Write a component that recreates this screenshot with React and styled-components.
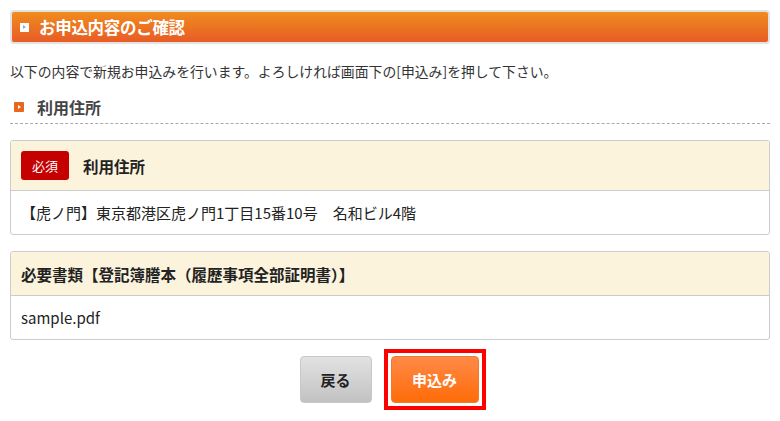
import styled, { createGlobalStyle } from "styled-components";

const GlobalStyle = createGlobalStyle`
  body {
    margin: 0;
    background: #fff;
    font-family: "Noto Sans CJK JP", "Noto Sans", sans-serif;
    color: #333;
  }
`;

const Page = styled.div`
  padding: 10px 10px 0;
  width: 760px;
`;

const TitleBar = styled.div`
  display: flex;
  align-items: center;
  gap: 10px;
  height: 30px;
  padding: 0 8px;
  border: 2px solid #e2e2e2;
  border-radius: 4px;
  background: linear-gradient(#f08c1e, #e85c26);
  color: #fff;
  font-size: 16.5px;
  font-weight: 700;
  letter-spacing: -0.3px;
`;

const TitleIcon = styled.span`
  width: 9px;
  height: 9px;
  background: #fff;
  display: flex;
  align-items: center;
  justify-content: center;
  &::after {
    content: "";
    border-left: 3px solid #aaa;
    border-top: 2px solid transparent;
    border-bottom: 2px solid transparent;
  }
`;

const Intro = styled.p`
  margin: 18px 0 0;
  font-size: 13.85px;
  line-height: 18px;
`;

const SectionHead = styled.h2`
  display: flex;
  align-items: center;
  gap: 13px;
  margin: 16px 0 0;
  padding: 0 0 5px 4px;
  border-bottom: 1px dashed #aaa;
  font-size: 16px;
  line-height: 22px;
  color: #444;
`;

const SectionIcon = styled.span`
  width: 10px;
  height: 10px;
  border-radius: 1px;
  background: #e8661e;
  display: flex;
  align-items: center;
  justify-content: center;
  &::after {
    content: "";
    border-left: 3px solid #fff;
    border-top: 2px solid transparent;
    border-bottom: 2px solid transparent;
  }
`;

const Card = styled.div`
  margin-top: 16px;
  border: 1px solid #ccc;
  border-radius: 3px;
  overflow: hidden;
`;

const CardHead = styled.div`
  display: flex;
  align-items: center;
  gap: 14px;
  height: ${(p) => p.$h}px;
  padding: 0 10px;
  background: #fcf3dd;
  border-bottom: 1px solid #ccc;
  font-size: 15.5px;
  font-weight: 700;
  color: #222;
`;

const Badge = styled.span`
  width: 48px;
  height: 29px;
  border-radius: 3px;
  background: #c50000;
  color: #fff;
  font-size: 13px;
  font-weight: 400;
  display: flex;
  align-items: center;
  justify-content: center;
`;

const CardBody = styled.div`
  height: 43px;
  padding: 0 10px;
  display: flex;
  align-items: center;
  font-size: 15px;
  color: #222;
`;

const Buttons = styled.div`
  display: flex;
  justify-content: center;
  align-items: center;
  gap: 12px;
  margin-top: 9px;
  padding-left: 5px;
`;

const Button = styled.button`
  width: ${(p) => p.$w}px;
  height: 47px;
  border-radius: 4px;
  font-family: inherit;
  font-size: 15px;
  font-weight: 700;
  cursor: pointer;
  border: 1px solid ${(p) => (p.$primary ? "#f07a30" : "#c8c8c8")};
  color: ${(p) => (p.$primary ? "#fff" : "#222")};
  background: ${(p) =>
    p.$primary
      ? "linear-gradient(#ff8a48, #ff6c08)"
      : "linear-gradient(#e2e2e2, #c2c2c2)"};
`;

const Highlight = styled.div`
  border: 4px solid #ff0000;
  padding: 3px;
  display: flex;
`;

export default function App() {
  return (
    <>
      <GlobalStyle />
      <Page>
        <TitleBar>
          <TitleIcon />
          お申込内容のご確認
        </TitleBar>
        <Intro>以下の内容で新規お申込みを行います。よろしければ画面下の[申込み]を押して下さい。</Intro>
        <SectionHead>
          <SectionIcon />
          利用住所
        </SectionHead>
        <Card>
          <CardHead $h={49}>
            <Badge>必須</Badge>
            利用住所
          </CardHead>
          <CardBody>【虎ノ門】東京都港区虎ノ門1丁目15番10号　名和ビル4階</CardBody>
        </Card>
        <Card>
          <CardHead $h={43}>必要書類【登記簿謄本（履歴事項全部証明書）】</CardHead>
          <CardBody>sample.pdf</CardBody>
        </Card>
        <Buttons>
          <Button $w={72}>戻る</Button>
          <Highlight>
            <Button $w={88} $primary>申込み</Button>
          </Highlight>
        </Buttons>
      </Page>
    </>
  );
}
